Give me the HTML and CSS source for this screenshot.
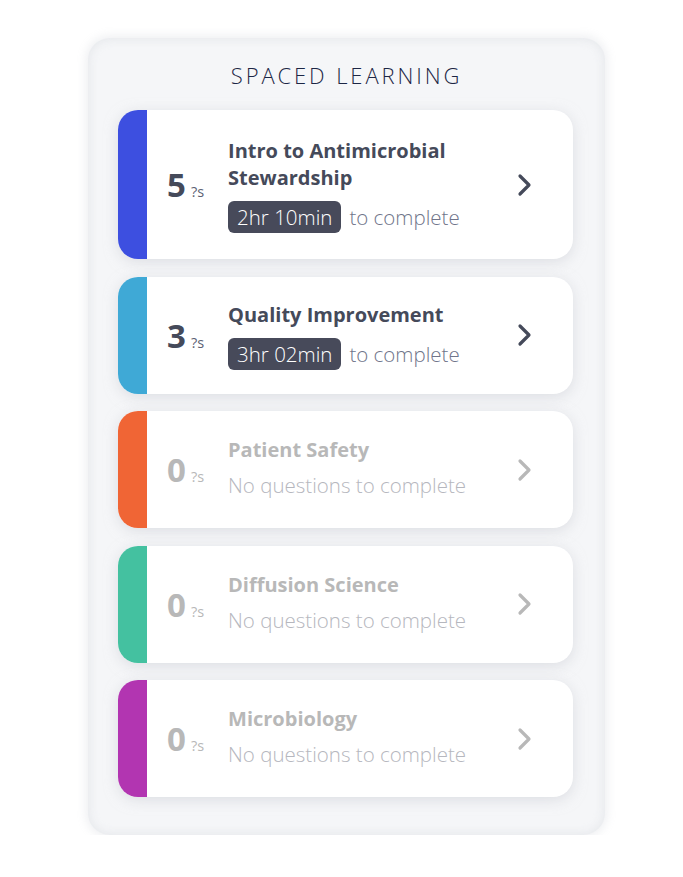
FILE: index.html
```html
<!DOCTYPE html>
<html>
<head>
<meta charset="utf-8">
<link rel="stylesheet" href="styles.css">
</head>
<body>
<div class="panel">
  <h1 class="title">SPACED LEARNING</h1>
  <div class="list">
    <div class="card tall">
      <div class="bar blue"></div>
      <div class="count"><span class="num">5</span><span class="qs">?s</span></div>
      <div class="info">
        <div class="name">Intro to Antimicrobial<br>Stewardship</div>
        <div class="time"><span class="badge">2hr 10min</span><span class="rest">to complete</span></div>
      </div>
      <svg class="chev" width="16" height="24" viewBox="0 0 16 24"><path d="M3 3 L12 12 L3 21" fill="none" stroke="currentColor" stroke-width="3.2" stroke-linecap="round" stroke-linejoin="round"/></svg>
    </div>
    <div class="card">
      <div class="bar cyan"></div>
      <div class="count"><span class="num">3</span><span class="qs">?s</span></div>
      <div class="info">
        <div class="name">Quality Improvement</div>
        <div class="time"><span class="badge">3hr 02min</span><span class="rest">to complete</span></div>
      </div>
      <svg class="chev" width="16" height="24" viewBox="0 0 16 24"><path d="M3 3 L12 12 L3 21" fill="none" stroke="currentColor" stroke-width="3.2" stroke-linecap="round" stroke-linejoin="round"/></svg>
    </div>
    <div class="card off">
      <div class="bar orange"></div>
      <div class="count"><span class="num">0</span><span class="qs">?s</span></div>
      <div class="info">
        <div class="name">Patient Safety</div>
        <div class="none">No questions to complete</div>
      </div>
      <svg class="chev" width="16" height="24" viewBox="0 0 16 24"><path d="M3 3 L12 12 L3 21" fill="none" stroke="currentColor" stroke-width="3.2" stroke-linecap="round" stroke-linejoin="round"/></svg>
    </div>
    <div class="card off">
      <div class="bar green"></div>
      <div class="count"><span class="num">0</span><span class="qs">?s</span></div>
      <div class="info">
        <div class="name">Diffusion Science</div>
        <div class="none">No questions to complete</div>
      </div>
      <svg class="chev" width="16" height="24" viewBox="0 0 16 24"><path d="M3 3 L12 12 L3 21" fill="none" stroke="currentColor" stroke-width="3.2" stroke-linecap="round" stroke-linejoin="round"/></svg>
    </div>
    <div class="card off">
      <div class="bar purple"></div>
      <div class="count"><span class="num">0</span><span class="qs">?s</span></div>
      <div class="info">
        <div class="name">Microbiology</div>
        <div class="none">No questions to complete</div>
      </div>
      <svg class="chev" width="16" height="24" viewBox="0 0 16 24"><path d="M3 3 L12 12 L3 21" fill="none" stroke="currentColor" stroke-width="3.2" stroke-linecap="round" stroke-linejoin="round"/></svg>
    </div>
  </div>
</div>
</body>
</html>
```

FILE: styles.css
```css
html, body {
  margin: 0;
  padding: 0;
  background: #ffffff;
}
body {
  font-family: "Open Sans", "Lato", sans-serif;
  color: #454a5a;
}
.panel {
  margin: 38px 0 0 88px;
  width: 517px;
  height: 797px;
  box-sizing: border-box;
  padding-top: 23px;
  background: #f5f6f8;
  border-radius: 22px;
  box-shadow: inset 0 0 8px 2px rgba(228, 230, 234, 0.8), 0 0 8px 3px rgba(238, 239, 242, 0.9);
}
.title {
  margin: 0 0 21px;
  text-align: center;
  font-size: 22px;
  font-weight: 300;
  letter-spacing: 2.9px;
  color: #1c2645;
  line-height: 28px;
}
.list {
  margin: 0 0 0 30px;
  width: 455px;
  display: flex;
  flex-direction: column;
  gap: 17.5px;
}
.card {
  height: 117px;
  background: #ffffff;
  border-radius: 20px;
  overflow: hidden;
  display: flex;
  align-items: center;
  box-shadow: 0 3px 14px rgba(200, 203, 210, 0.55);
}
.card.tall {
  height: 149px;
}
.bar {
  align-self: stretch;
  width: 29px;
  flex: none;
}
.blue { background: #3d4fe0; }
.cyan { background: #3fa9d6; }
.orange { background: #f06535; }
.green { background: #44c1a0; }
.purple { background: #b235b1; }
.count {
  flex: none;
  padding-left: 20px;
  margin-right: 24px;
  display: flex;
  align-items: baseline;
}
.num {
  font-size: 33px;
  font-weight: 700;
  color: #454a5a;
}
.qs {
  font-size: 14.5px;
  margin-left: 5px;
  color: #5d6273;
}
.info {
  flex: 1;
}
.name {
  font-size: 20px;
  font-weight: 700;
  line-height: 27px;
  color: #454a5a;
}
.time {
  margin-top: 10px;
  display: flex;
  align-items: center;
}
.badge {
  display: inline-block;
  background: #474a5a;
  color: #ffffff;
  font-size: 20.5px;
  font-weight: 300;
  border-radius: 6px;
  padding: 0 9px;
  height: 32px;
  line-height: 32px;
}
.rest {
  margin-left: 8px;
  font-size: 20.5px;
  font-weight: 300;
  color: #70758a;
}
.none {
  margin: 8px 0 4px;
  font-size: 20.5px;
  line-height: 28px;
  font-weight: 300;
  color: #b6b7be;
}
.chev {
  flex: none;
  margin-right: 40px;
  color: #454a5a;
}
.off .num, .off .name { color: #b8b8b8; }
.off .qs { color: #b8b8b8; }
.off .chev { color: #b8b8b8; }
```
